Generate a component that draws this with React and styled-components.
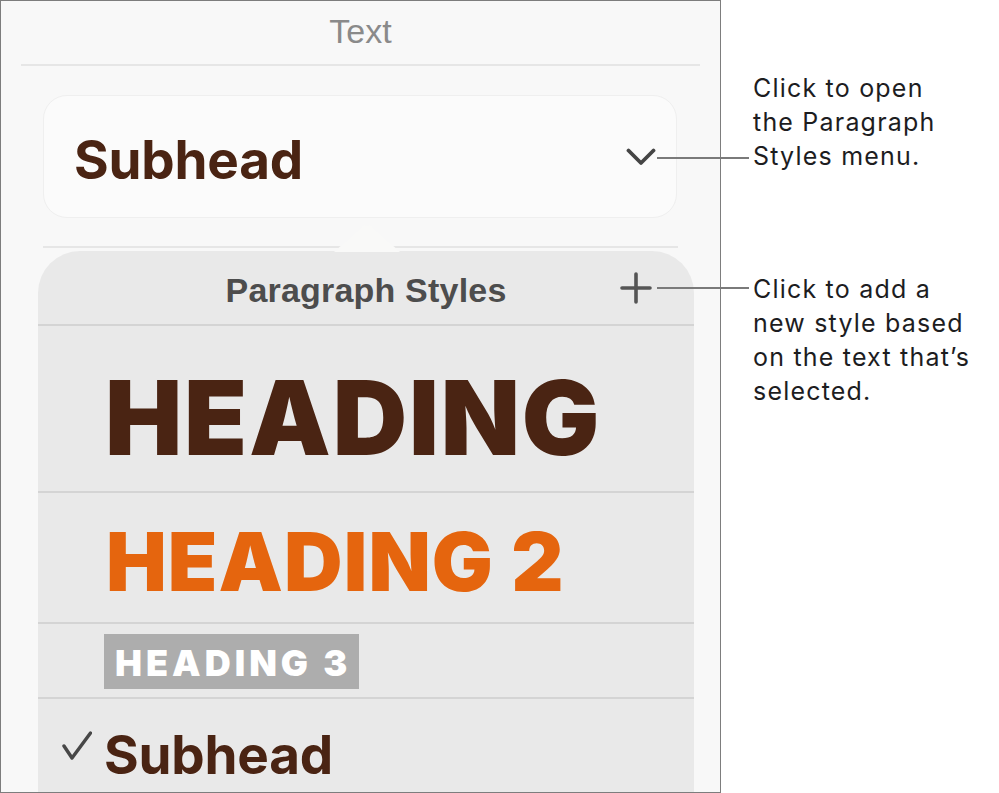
import React from 'react';
import styled, { createGlobalStyle } from 'styled-components';

const Global = createGlobalStyle`
  html, body { margin: 0; padding: 0; background: #ffffff; }
  body { font-family: "Liberation Sans", Arial, sans-serif; }
`;

const BROWN = '#4a2413';
const HEAVY = 'Inter, "Liberation Sans", Arial, sans-serif';

const Page = styled.div`
  display: flex;
  width: 999px;
  height: 793px;
  overflow: hidden;
  background: #ffffff;
`;

const Panel = styled.section`
  box-sizing: border-box;
  flex: none;
  width: 721px;
  height: 793px;
  border: 1px solid #7d7d7d;
  background: #f8f8f8;
  display: flex;
  flex-direction: column;
  overflow: hidden;
`;

const PanelTitle = styled.div`
  padding: 13px 0 16px;
  text-align: center;
  font-size: 34px;
  line-height: 34px;
  color: #8a8a8a;
`;

const Rule = styled.div`
  flex: none;
  height: 2px;
  margin: ${(p) => p.$top || 0}px ${(p) => p.$right}px 0 ${(p) => p.$left}px;
  background: #e6e6e6;
`;

const StyleButton = styled.div`
  box-sizing: border-box;
  flex: none;
  height: 123px;
  margin: 29px 43px 0 42px;
  padding: 0 20px 0 30px;
  border: 1px solid #efefef;
  border-radius: 24px;
  background: #fbfbfb;
  display: flex;
  align-items: center;
  justify-content: space-between;
`;

const StyleLabel = styled.span`
  margin-top: 6px;
  font-family: ${HEAVY};
  font-size: 53px;
  line-height: 54px;
  font-weight: 700;
  color: ${BROWN};
  letter-spacing: -0.2px;
`;

const Popover = styled.div`
  position: relative;
  flex: 1;
  margin: 3px 26px 0 37px;
  background: #e9e9e9;
  border-radius: 42px 42px 0 0;
  display: flex;
  flex-direction: column;
`;

const Arrow = styled.svg`
  position: absolute;
  top: -28px;
  left: 296px;
  width: 66px;
  height: 29px;
`;

const PopoverHeader = styled.div`
  box-sizing: border-box;
  height: 75px;
  padding-top: 22px;
  border-bottom: 2px solid #d4d4d4;
  display: grid;
  grid-template-columns: 1fr auto 1fr;
  align-items: start;
`;

const PopoverTitle = styled.div`
  grid-column: 2;
  font-size: 34px;
  line-height: 34px;
  font-weight: 700;
  color: #4d4d4d;
  letter-spacing: 0.2px;
`;

const AddButton = styled.svg`
  grid-column: 3;
  justify-self: end;
  margin: -1px 42px 0 0;
  width: 32px;
  height: 32px;
`;

const StyleRow = styled.div`
  display: flex;
  align-items: flex-start;
  padding: ${(p) => p.$pad};
  border-bottom: ${(p) => (p.$last ? 'none' : '2px solid #d4d4d4')};
`;

const BigHeading = styled.span`
  font-family: ${HEAVY};
  font-size: ${(p) => p.$size}px;
  line-height: ${(p) => p.$size}px;
  font-weight: 900;
  color: ${(p) => p.$color};
  letter-spacing: ${(p) => p.$spacing}px;
  white-space: nowrap;
`;

const Badge = styled.span`
  display: inline-block;
  height: 55px;
  box-sizing: border-box;
  padding: 4px 8px 0 11px;
  background: #adadad;
  color: #ffffff;
  font-family: ${HEAVY};
  font-size: 36px;
  line-height: 51px;
  font-weight: 900;
  letter-spacing: 4px;
  white-space: nowrap;
`;

const Check = styled.svg`
  flex: none;
  width: 30px;
  height: 29px;
  margin: 9px 12px 0 0;
`;

const Notes = styled.div`
  flex: 1;
  padding: 71px 0 0 32px;
  font-family: Inter, Roboto, "Liberation Sans", sans-serif;
  font-size: 25px;
  line-height: 34px;
  color: #1d1d1f;
  letter-spacing: 1.2px;
`;

const Note = styled.p`
  position: relative;
  margin: ${(p) => p.$top || 0}px 0 0;
  white-space: nowrap;

  &::before {
    content: '';
    position: absolute;
    left: -96px;
    top: ${(p) => p.$leader}px;
    width: 92px;
    height: 2px;
    background: #7a7a7a;
  }
`;

export default function App() {
  return (
    <Page>
      <Global />
      <Panel>
        <PanelTitle>Text</PanelTitle>
        <Rule $left={20} $right={20} />
        <StyleButton>
          <StyleLabel>Subhead</StyleLabel>
          <svg width="30" height="18" viewBox="0 0 30 18" fill="none">
            <polyline
              points="2.5,2.5 15,15 27.5,2.5"
              stroke="#454545"
              strokeWidth="3.8"
              strokeLinecap="round"
              strokeLinejoin="round"
            />
          </svg>
        </StyleButton>
        <Rule $top={28} $left={42} $right={42} />
        <Popover>
          <Arrow viewBox="0 0 66 29">
            <path d="M0 29 L27 4.5 Q33 -0.5 39 4.5 L66 29 Z" fill="#f9f9f8" />
          </Arrow>
          <PopoverHeader>
            <PopoverTitle>Paragraph Styles</PopoverTitle>
            <AddButton viewBox="0 0 32 32" fill="none">
              <path d="M16 2 V30 M2 16 H30" stroke="#555555" strokeWidth="3.6" strokeLinecap="round" />
            </AddButton>
          </PopoverHeader>
          <StyleRow $pad="40px 0 22px 67px">
            <BigHeading $size={103} $color={BROWN} $spacing={1.8}>HEADING</BigHeading>
          </StyleRow>
          <StyleRow $pad="29px 0 19px 68px">
            <BigHeading $size={81} $color="#e5650e" $spacing={1.1}>HEADING 2</BigHeading>
          </StyleRow>
          <StyleRow $pad="10px 0 8px 66px">
            <Badge>HEADING 3</Badge>
          </StyleRow>
          <StyleRow $pad="23px 0 0 24px" $last>
            <Check viewBox="0 0 30 29" fill="none">
              <path d="M2 15 L10 27 L28.5 2" stroke="#474747" strokeWidth="3.4" strokeLinecap="round" strokeLinejoin="round" />
            </Check>
            <StyleLabel>Subhead</StyleLabel>
          </StyleRow>
        </Popover>
      </Panel>
      <Notes>
        <Note $leader={86}>
          Click to open
          <br />
          the Paragraph
          <br />
          Styles menu.
        </Note>
        <Note $top={99} $leader={15}>
          Click to add a
          <br />
          new style based
          <br />
          on the text that’s
          <br />
          selected.
        </Note>
      </Notes>
    </Page>
  );
}
